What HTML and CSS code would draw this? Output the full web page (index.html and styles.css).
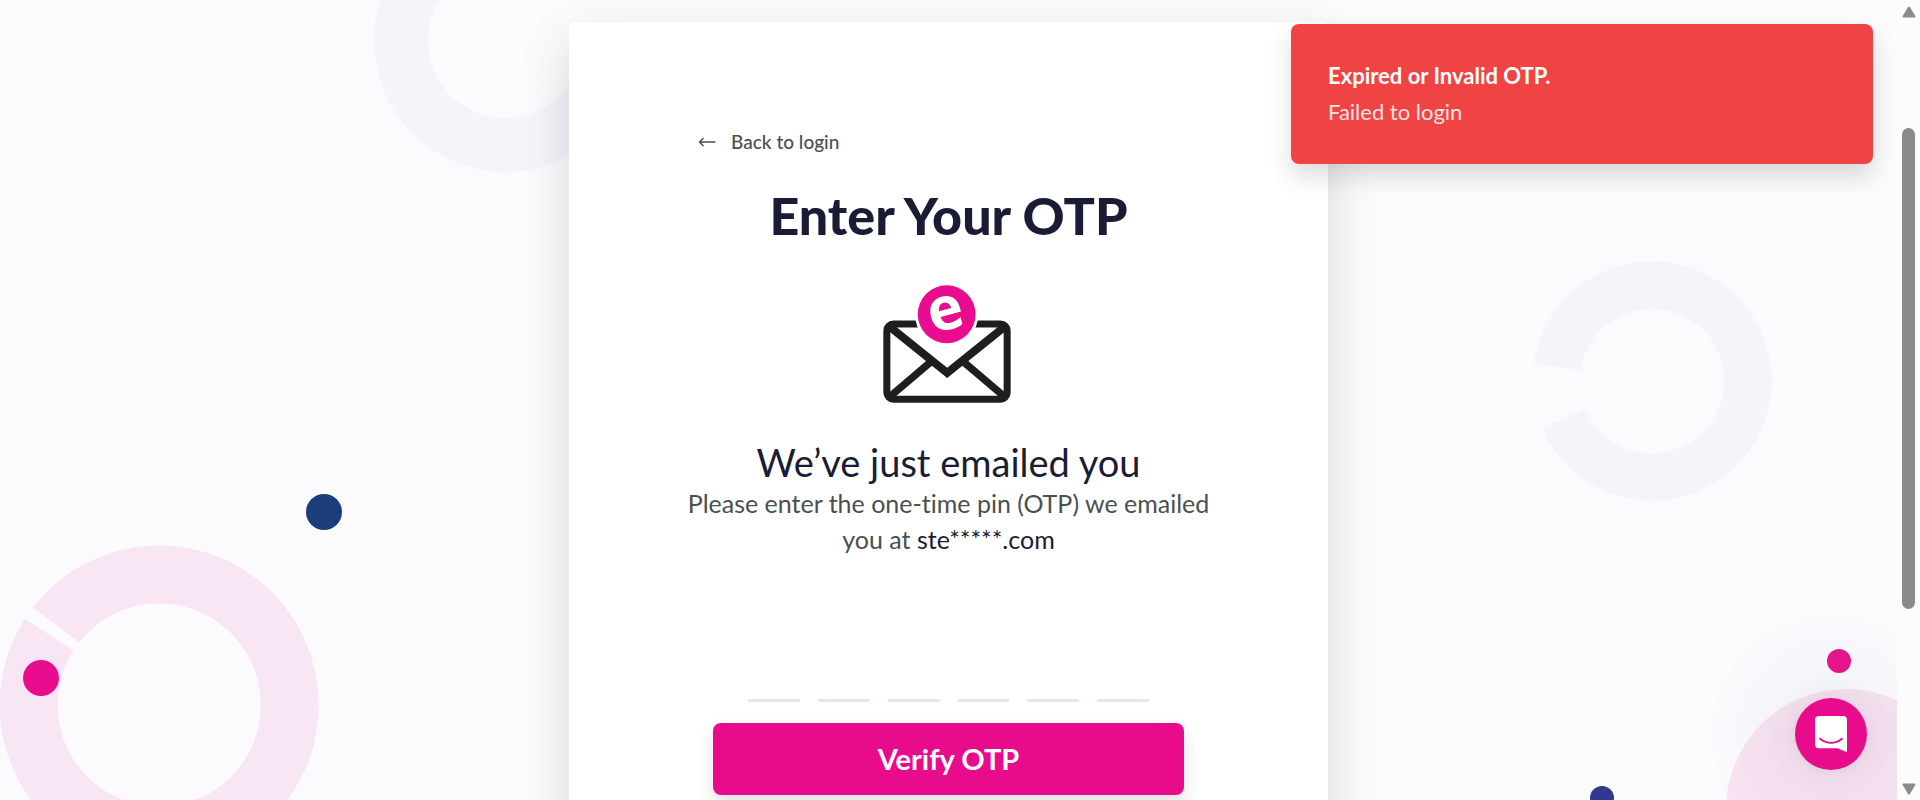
FILE: index.html
```html
<!DOCTYPE html>
<html lang="en">
<head>
<meta charset="utf-8">
<title>Enter Your OTP</title>
<link rel="stylesheet" href="styles.css">
</head>
<body>
<div class="window">
  <div class="page">
    <div class="shapes" aria-hidden="true">
      <svg class="shape ring-top" viewBox="0 0 262 262"><path d="M235 131A104 104 0 1 1 131 27" fill="none" stroke="#f4f4fa" stroke-width="54"/></svg>
      <svg class="shape ring-left" viewBox="0 0 319 319"><path d="M56 80.1A130.5 130.5 0 1 1 49.3 89.6" fill="none" stroke="#f8e6f4" stroke-width="58"/></svg>
      <svg class="shape ring-right" viewBox="0 0 240 240"><path d="M25 105.8A96 96 0 1 1 31.7 157.7" fill="none" stroke="#f4f4fa" stroke-width="47.5"/></svg>
      <span class="shape dot dot-navy"></span>
      <span class="shape dot dot-pink"></span>
      <span class="shape disc"></span>
      <span class="shape dot dot-rose"></span>
      <span class="shape dot dot-indigo"></span>
    </div>

    <main class="card">
      <a class="back" href="#">
        <svg class="back-icon" viewBox="0 0 18 12" aria-hidden="true"><path d="M17.5 6H1.5M5.5 2L1.5 6l4 4" fill="none" stroke="currentColor" stroke-width="1.5"/></svg>
        Back to login
      </a>
      <h1 class="title">Enter Your OTP</h1>
      <svg class="mail" viewBox="129 47 383 353" aria-hidden="true">
        <g fill="none" stroke="#1e1e20" stroke-width="22">
          <rect x="140.500" y="163.500" width="360" height="225" rx="20" stroke-width="21"/>
          <path d="M144 168L321 310 498 168" stroke-width="24"/>
          <path d="M144 386L272 277M498 386L370 277"/>
        </g>
        <circle cx="319.500" cy="134.500" r="95" fill="#fff"/>
        <circle cx="319.500" cy="134.500" r="86.500" fill="#ea0c8e"/>
        <text class="mail-letter" x="317" y="180" text-anchor="middle" transform="rotate(-15 319 134)">e</text>
      </svg>
      <h2 class="subtitle">We’ve just emailed you</h2>
      <p class="message">Please enter the one-time pin (OTP) we emailed you at <span class="address">ste*****.com</span></p>
      <form class="form">
        <div class="digits">
          <input class="digit" type="text" inputmode="numeric" maxlength="1" aria-label="Digit 1">
          <input class="digit" type="text" inputmode="numeric" maxlength="1" aria-label="Digit 2">
          <input class="digit" type="text" inputmode="numeric" maxlength="1" aria-label="Digit 3">
          <input class="digit" type="text" inputmode="numeric" maxlength="1" aria-label="Digit 4">
          <input class="digit" type="text" inputmode="numeric" maxlength="1" aria-label="Digit 5">
          <input class="digit" type="text" inputmode="numeric" maxlength="1" aria-label="Digit 6">
        </div>
        <button class="verify" type="submit">Verify OTP</button>
      </form>
    </main>

    <div class="toast" role="alert">
      <strong class="toast-title">Expired or Invalid OTP.</strong>
      <span class="toast-text">Failed to login</span>
    </div>

    <div class="chat-glow" aria-hidden="true"></div>
    <button class="chat" type="button" aria-label="Open chat">
      <svg class="chat-icon" viewBox="0 0 32 36" aria-hidden="true">
        <path d="M4 0H28a4 4 0 0 1 4 4V36C29 35.300 25.500 33.700 22.500 32.300H4a4 4 0 0 1-4-4V4a4 4 0 0 1 4-4z" fill="#fff"/>
        <path d="M5 22.800Q16 31 27 22.800" fill="none" stroke="#e80c8c" stroke-width="1.800" stroke-linecap="round"/>
      </svg>
    </button>
  </div>

  <div class="scrollbar" aria-hidden="true">
    <svg class="scroll-arrow" viewBox="0 0 14 12"><path d="M7 1.500L12.500 10.500H1.500z" fill="#8b8b8b" stroke="#8b8b8b" stroke-width="2" stroke-linejoin="round"/></svg>
    <div class="scroll-track"><div class="scroll-thumb"></div></div>
    <svg class="scroll-arrow" viewBox="0 0 14 12"><path d="M7 10.500L12.500 1.500H1.500z" fill="#8b8b8b" stroke="#8b8b8b" stroke-width="2" stroke-linejoin="round"/></svg>
  </div>
</div>
</body>
</html>
```
FILE: styles.css
```css
* { box-sizing: border-box; }

body {
  margin: 0;
  font-family: Lato, "Open Sans", sans-serif;
  font-variant-ligatures: none;
  color: #1a1c35;
  background: #fbfbfe;
}

.window {
  display: flex;
  height: 100vh;
  overflow: hidden;
}

.page {
  position: relative;
  flex: 1;
  padding-top: 22px;
  overflow: hidden;
}

/* Background decoration */
.shapes {
  position: absolute;
  inset: 0;
  overflow: hidden;
}
.shape { position: absolute; }
.ring-top { left: 374px; top: -90px; width: 262px; }
.ring-left { left: 0; top: 545px; width: 319px; }
.ring-right { right: 125px; top: 261px; width: 240px; }
.dot { border-radius: 50%; }
.dot-navy { left: 306px; top: 494px; width: 36px; height: 36px; background: #1c3d7a; }
.dot-pink { left: 23px; top: 660px; width: 36px; height: 36px; background: #ea0c8e; }
.disc { right: -69px; top: 689px; width: 240px; height: 240px; border-radius: 50%; background: #f8e3f2; }
.dot-rose { right: 46px; top: 649px; width: 24px; height: 24px; background: #e8168c; }
.dot-indigo { right: 283px; top: 786px; width: 24px; height: 24px; background: #31388f; }

/* Card */
.card {
  position: relative;
  display: flex;
  flex-direction: column;
  align-items: center;
  width: 40%;
  margin: 0 auto;
  padding: 104px 100px 160px;
  border-radius: 6px;
  background: #fff;
  box-shadow: 0 20px 50px rgba(0, 0, 0, 0.15);
}

.back {
  display: flex;
  align-items: center;
  align-self: flex-start;
  gap: 15px;
  margin-left: 29px;
  font-size: 19px;
  font-weight: 500;
  line-height: 32px;
  color: #4b4f4f;
  text-decoration: none;
}
.back-icon { width: 18px; height: 12px; }

.title {
  margin: 21px 0 0;
  font-size: 52px;
  font-weight: 900;
  line-height: 72px;
  white-space: nowrap;
}

.mail {
  width: 128px;
  height: 118px;
  margin: 34px 3px 0 0;
  overflow: visible;
}
.mail-letter {
  font-family: "Open Sans", sans-serif;
  font-size: 180px;
  font-weight: 700;
  fill: #fff;
}

.subtitle {
  margin: 36px 0 0;
  font-size: 38px;
  font-weight: 400;
  line-height: 46px;
}

.message {
  margin: 0;
  font-size: 25px;
  line-height: 36px;
  text-align: center;
  color: #4b4f4f;
}
.address { color: #1a1c35; }

.form {
  display: flex;
  flex-direction: column;
  align-items: center;
  width: 471px;
  max-width: 100%;
  margin-top: 81px;
}

.digits {
  display: flex;
  gap: 18px;
  width: 400px;
}
.digit {
  flex: 1;
  min-width: 0;
  height: 64px;
  padding: 0;
  border: 0;
  border-bottom: 3px solid #e2e8f0;
  background: transparent;
  font: inherit;
  font-size: 32px;
  text-align: center;
}

.verify {
  width: 100%;
  height: 72px;
  margin-top: 21px;
  padding: 0 0 2px;
  border: 0;
  border-radius: 8px;
  background: #e80c8c;
  box-shadow: 0 8px 18px rgba(0, 0, 0, 0.12);
  font-family: inherit;
  font-size: 29px;
  font-weight: 700;
  color: #fff;
}

/* Toast */
.toast {
  position: absolute;
  top: 24px;
  right: 24px;
  display: flex;
  flex-direction: column;
  width: 582px;
  padding: 34px 37px;
  border-radius: 8px;
  background: #f04444;
  box-shadow: 0 12px 24px rgba(0, 0, 0, 0.14);
  font-size: 22px;
  line-height: 36px;
  color: #fff;
}
.toast-title { font-weight: 700; }
.toast-text { opacity: 0.85; }

/* Chat launcher */
.chat-glow {
  position: absolute;
  right: -59px;
  bottom: -59px;
  width: 250px;
  height: 250px;
  background: radial-gradient(closest-side, rgba(29, 39, 54, 0.05), rgba(29, 39, 54, 0));
}
.chat {
  position: absolute;
  right: 30px;
  bottom: 30px;
  display: flex;
  align-items: center;
  justify-content: center;
  width: 72px;
  height: 72px;
  padding: 0;
  border: 0;
  border-radius: 50%;
  background: #e80c8c;
  box-shadow: 0 1px 6px rgba(0, 0, 0, 0.04), 0 2px 32px rgba(0, 0, 0, 0.06);
}
.chat-icon { width: 32px; height: 36px; }

/* Scrollbar */
.scrollbar {
  display: flex;
  flex-direction: column;
  align-items: center;
  width: 23px;
  padding: 6px 0 5px;
  background: #fcfcfc;
}
.scroll-arrow { width: 14px; height: 12px; }
.scroll-track { flex: 1; padding-top: 110px; }
.scroll-thumb { width: 13px; height: 481px; border-radius: 7px; background: #8b8b8b; }
```
